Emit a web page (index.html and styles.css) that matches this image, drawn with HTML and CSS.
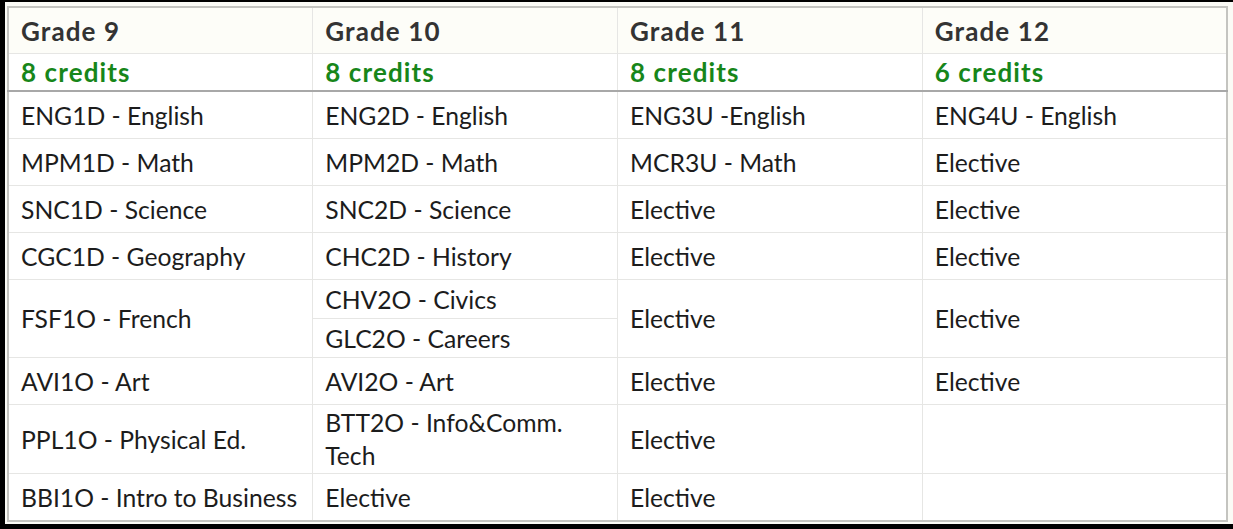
FILE: index.html
```html
<!DOCTYPE html>
<html>
<head>
<meta charset="utf-8">
<link rel="stylesheet" href="styles.css">
</head>
<body>
<div class="frame">
  <table class="grid">
    <colgroup>
      <col class="c"><col class="c"><col class="c"><col class="c">
    </colgroup>
    <thead>
      <tr class="grade">
        <th>Grade 9</th><th>Grade 10</th><th>Grade 11</th><th>Grade 12</th>
      </tr>
      <tr class="credits">
        <th>8 credits</th><th>8 credits</th><th>8 credits</th><th>6 credits</th>
      </tr>
    </thead>
    <tbody>
      <tr class="row"><td>ENG1D - English</td><td>ENG2D - English</td><td>ENG3U -English</td><td>ENG4U - English</td></tr>
      <tr class="row"><td>MPM1D - Math</td><td>MPM2D - Math</td><td>MCR3U - Math</td><td>Elective</td></tr>
      <tr class="row"><td>SNC1D - Science</td><td>SNC2D - Science</td><td>Elective</td><td>Elective</td></tr>
      <tr class="row"><td>CGC1D - Geography</td><td>CHC2D - History</td><td>Elective</td><td>Elective</td></tr>
      <tr class="sub"><td rowspan="2">FSF1O - French</td><td>CHV2O - Civics</td><td rowspan="2">Elective</td><td rowspan="2">Elective</td></tr>
      <tr class="sub"><td>GLC2O - Careers</td></tr>
      <tr class="row"><td>AVI1O - Art</td><td>AVI2O - Art</td><td>Elective</td><td>Elective</td></tr>
      <tr class="tall"><td>PPL1O - Physical Ed.</td><td>BTT2O - Info&amp;Comm.<br>Tech</td><td>Elective</td><td></td></tr>
      <tr class="row last"><td>BBI1O - Intro to Business</td><td>Elective</td><td>Elective</td><td></td></tr>
    </tbody>
  </table>
</div>
</body>
</html>
```

FILE: styles.css
```css
html, body {
  margin: 0;
  padding: 0;
}
body {
  width: 1233px;
  height: 529px;
  background: #000;
  font-family: Lato, "Noto Sans", sans-serif;
  overflow: hidden;
}
.frame {
  box-sizing: border-box;
  height: 522px;
  margin-top: 2px;
  margin-left: 5px;
  width: 1228px;
  background: #fbfbf6;
  padding: 4px 4px 0 2px;
}
.grid {
  border-collapse: collapse;
  table-layout: fixed;
  width: 1221px;
  background: #fff;
  border: 2px solid #c4c4c0;
  color: #1c1c1c;
}
.grid col.c {
  width: 25%;
}
.grid th,
.grid td {
  text-align: left;
  padding: 0 0 0 12px;
  border: 1px solid #e6e6e4;
  vertical-align: middle;
  white-space: nowrap;
  overflow: hidden;
}
.grid tr.grade th {
  height: 45px;
  font-size: 26px;
  font-weight: 700;
  letter-spacing: 1.1px;
  color: #333;
  background: #fdfdf8;
}
.grid tr.credits th {
  height: 36px;
  font-size: 26px;
  font-weight: 700;
  letter-spacing: 1.1px;
  color: #17861a;
  border-bottom: 2px solid #a8a8a8;
}
.grid td {
  font-size: 24.7px;
  line-height: 33px;
}
.grid tr.row td {
  height: 46px;
}
.grid tr.sub td {
  height: 38px;
}
.grid tr.tall td {
  height: 68px;
  white-space: normal;
}
```
